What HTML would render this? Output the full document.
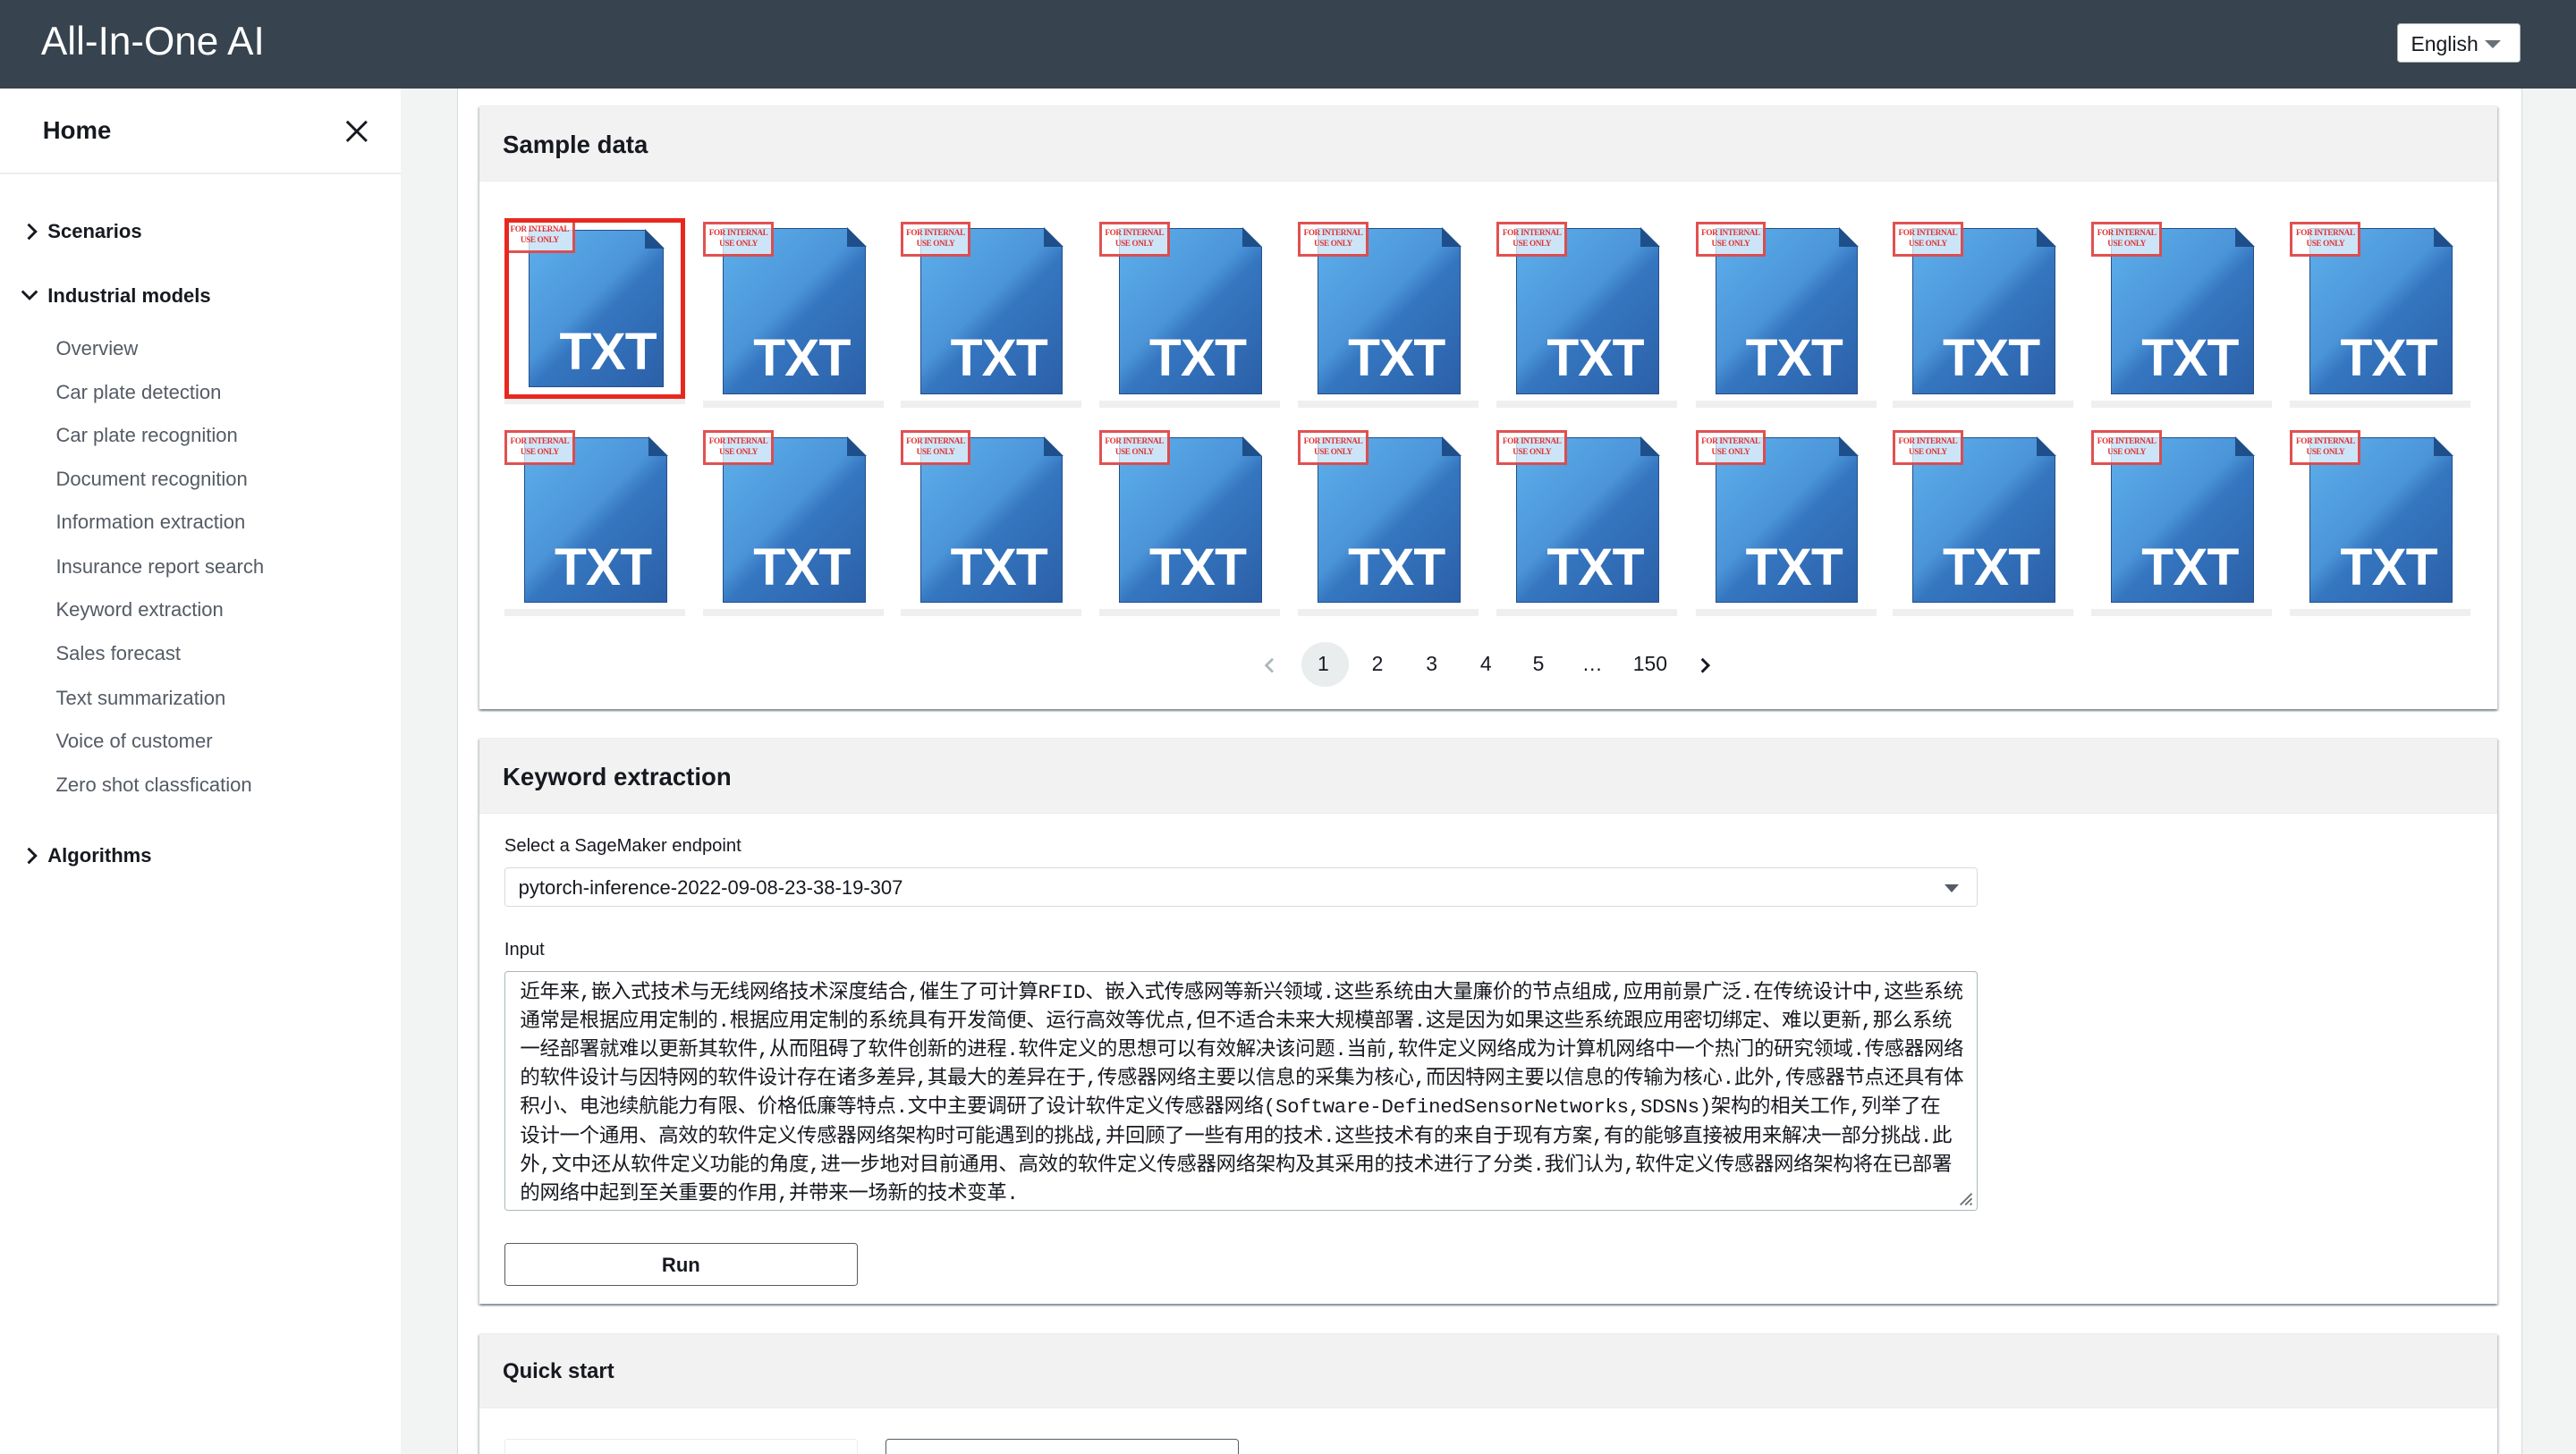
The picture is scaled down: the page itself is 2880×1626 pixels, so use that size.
<!DOCTYPE html>
<html><head><meta charset="utf-8"><style>
*{box-sizing:border-box;margin:0;padding:0}
html,body{width:2880px;height:1626px;overflow:hidden;background:#fff}
#z{zoom:1.83673;width:1568px;height:886px;position:relative;font-family:"Liberation Sans",Arial,sans-serif;color:#16191f;overflow:hidden}
.a{position:absolute}
.hdr{left:0;top:0;width:1568px;height:54px;background:#37434e}
.side{left:0;top:54px;width:244px;height:832px;background:#fff}
.gap{left:244px;top:54px;width:35px;height:832px;background:#f2f3f3;border-right:1px solid #d5dbdb}
.rgap{left:1535px;top:54px;width:33px;height:832px;background:#f2f3f3;border-left:1px solid #d5dbdb}
.nav{font-size:12px;color:#545b64;left:34px}
.card{background:#fff;box-shadow:0 1px 1px 0 rgba(0,28,36,.3),1px 1px 1px 0 rgba(0,28,36,.15),-1px 1px 1px 0 rgba(0,28,36,.15);border-top:1px solid #eaeded}
.ch{left:0;top:0;right:0;height:46px;background:#f2f2f2;border-bottom:1px solid #eaeded;font-weight:bold;font-size:15px;padding:15px 0 0 14px}
.t{position:absolute;width:110px;height:114px}
.st{position:absolute;left:0;top:0;width:43px;height:21px;border:2px solid rgba(220,50,50,.85);background:rgba(255,255,255,.7);z-index:2;font-family:"Liberation Serif",serif;font-size:5px;color:#d33;text-align:center;line-height:6.5px;padding-top:2px;font-weight:bold;white-space:nowrap;letter-spacing:-0.2px;overflow:hidden}
.f{position:absolute;left:12px;top:4px;width:87px;height:101px;background:linear-gradient(135deg,#5eb0ec 0%,#4b94d8 45%,#3576c0 55%,#2b60a8 100%);border:1px solid #244f88}
.f:after{content:"";position:absolute;right:-1px;top:-1px;width:0;height:0;border-top:12px solid #fff;border-left:12px solid #1f4f8a}
.f b{position:absolute;left:18px;bottom:3px;color:#fff;font-size:32px;font-weight:bold;letter-spacing:-.5px}
.sp{position:absolute;left:0;top:109px;width:110px;height:4px;background:#efefef}
.lbl{font-size:11px;color:#16191f}
.ta{font-family:"Liberation Mono","Noto Sans CJK SC",monospace;font-size:12.2px;line-height:17.5px;color:#16191f;white-space:nowrap;letter-spacing:-0.15px}
</style></head><body><div id="z">
<div class="a hdr"></div>
<div class="a" style="left:25px;top:12px;color:#fff;font-size:24px">All-In-One AI</div>
<div class="a" style="left:1459px;top:14px;width:75px;height:24px;background:#fff;border:1px solid #aab7b8;border-radius:2px;font-size:12.5px;padding:5px 0 0 8px;color:#16191f">English<span style="position:absolute;right:11px;top:10px;border-left:5px solid transparent;border-right:5px solid transparent;border-top:5px solid #687078"></span></div>

<div class="a side"></div>
<div class="a gap"></div>
<div class="a rgap"></div>
<div class="a" style="left:26px;top:71px;font-size:15px;font-weight:bold">Home</div>
<svg class="a" style="left:210px;top:73px" width="14" height="14" viewBox="0 0 14 14"><path d="M1 1L13 13M13 1L1 13" stroke="#16191f" stroke-width="1.6"/></svg>
<div class="a" style="left:0;top:105px;width:244px;height:1px;background:#eaeded"></div>
<svg class="a" style="left:14px;top:135px" width="10" height="12"><path d="M3 1.5L7.5 6L3 10.5" stroke="#16191f" stroke-width="1.6" fill="none"/></svg>
<div class="a" style="left:29px;top:134px;font-size:12px;font-weight:bold">Scenarios</div>
<svg class="a" style="left:12px;top:175px" width="12" height="10"><path d="M1.5 2.5L6 7L10.5 2.5" stroke="#16191f" stroke-width="1.6" fill="none"/></svg>
<div class="a" style="left:29px;top:173px;font-size:12px;font-weight:bold">Industrial models</div>
<div class="a nav" style="top:205px">Overview</div>
<div class="a nav" style="top:232px">Car plate detection</div>
<div class="a nav" style="top:258px">Car plate recognition</div>
<div class="a nav" style="top:285px">Document recognition</div>
<div class="a nav" style="top:311px">Information extraction</div>
<div class="a nav" style="top:338px">Insurance report search</div>
<div class="a nav" style="top:364px">Keyword extraction</div>
<div class="a nav" style="top:391px">Sales forecast</div>
<div class="a nav" style="top:418px">Text summarization</div>
<div class="a nav" style="top:444px">Voice of customer</div>
<div class="a nav" style="top:471px">Zero shot classfication</div>
<svg class="a" style="left:14px;top:515px" width="10" height="12"><path d="M3 1.5L7.5 6L3 10.5" stroke="#16191f" stroke-width="1.6" fill="none"/></svg>
<div class="a" style="left:29px;top:514px;font-size:12px;font-weight:bold">Algorithms</div>

<div class="a card" style="left:292px;top:64px;width:1228px;height:368px">
<div class="a ch">Sample data</div>
</div>
<div id="g"></div>
<script>
var xs=[307,428,548,669,790,911,1032,1152,1273,1394],ys=[133,260],h='';
ys.forEach(function(y,r){xs.forEach(function(x,c){
var sel=(r==0&&c==0);
h+='<div class="t" style="left:'+x+'px;top:'+(y+(sel?0:2))+'px"><div class="st">FOR INTERNAL<br>USE ONLY</div><div class="f"'+(sel?' style="left:15px;top:7px;width:82px;height:96px"':'')+'><b>TXT</b></div><div class="sp"></div>'+(sel?'<div style="position:absolute;left:0;top:0;width:110px;height:110px;border:3px solid #e8281f;z-index:3"></div>':'')+'</div>';
});});
document.getElementById('g').innerHTML=h;
</script>
<div class="a" style="left:792px;top:391px;width:29px;height:27px;border-radius:50%;background:#eaeded"></div>
<svg class="a" style="left:769px;top:400px" width="8" height="10"><path d="M6 1L2 5L6 9" stroke="#aab7b8" stroke-width="1.5" fill="none"/></svg>
<div class="a" style="left:802px;top:397px;font-size:12.5px">1</div>
<div class="a" style="left:835px;top:397px;font-size:12.5px">2</div>
<div class="a" style="left:868px;top:397px;font-size:12.5px">3</div>
<div class="a" style="left:901px;top:397px;font-size:12.5px">4</div>
<div class="a" style="left:933px;top:397px;font-size:12.5px">5</div>
<div class="a" style="left:963px;top:397px;font-size:12.5px">…</div>
<div class="a" style="left:994px;top:397px;font-size:12.5px">150</div>
<svg class="a" style="left:1034px;top:400px" width="8" height="10"><path d="M2 1L6 5L2 9" stroke="#16191f" stroke-width="1.6" fill="none"/></svg>

<div class="a card" style="left:292px;top:449px;width:1228px;height:345px">
<div class="a ch">Keyword extraction</div>
</div>
<div class="a lbl" style="left:307px;top:509px">Select a SageMaker endpoint</div>
<div class="a" style="left:307px;top:528px;width:897px;height:24px;border:1px solid #d5dbdb;border-radius:2px;font-size:12px;padding:5px 0 0 8px">pytorch-inference-2022-09-08-23-38-19-307<span style="position:absolute;right:11px;top:10px;border-left:4.5px solid transparent;border-right:4.5px solid transparent;border-top:5px solid #545b64"></span></div>
<div class="a lbl" style="left:307px;top:572px">Input</div>
<div class="a ta" style="left:307px;top:591px;width:897px;height:146px;border:1px solid #aab7b8;border-radius:2px;padding:4px 0 0 9px;overflow:hidden">近年来,嵌入式技术与无线网络技术深度结合,催生了可计算RFID、嵌入式传感网等新兴领域.这些系统由大量廉价的节点组成,应用前景广泛.在传统设计中,这些系统<br>通常是根据应用定制的.根据应用定制的系统具有开发简便、运行高效等优点,但不适合未来大规模部署.这是因为如果这些系统跟应用密切绑定、难以更新,那么系统<br>一经部署就难以更新其软件,从而阻碍了软件创新的进程.软件定义的思想可以有效解决该问题.当前,软件定义网络成为计算机网络中一个热门的研究领域.传感器网络<br>的软件设计与因特网的软件设计存在诸多差异,其最大的差异在于,传感器网络主要以信息的采集为核心,而因特网主要以信息的传输为核心.此外,传感器节点还具有体<br>积小、电池续航能力有限、价格低廉等特点.文中主要调研了设计软件定义传感器网络(Software-DefinedSensorNetworks,SDSNs)架构的相关工作,列举了在<br>设计一个通用、高效的软件定义传感器网络架构时可能遇到的挑战,并回顾了一些有用的技术.这些技术有的来自于现有方案,有的能够直接被用来解决一部分挑战.此<br>外,文中还从软件定义功能的角度,进一步地对目前通用、高效的软件定义传感器网络架构及其采用的技术进行了分类.我们认为,软件定义传感器网络架构将在已部署<br>的网络中起到至关重要的作用,并带来一场新的技术变革.
<svg style="position:absolute;right:2px;bottom:2px" width="10" height="10"><path d="M9 2L2 9M9 5L5 9M9 8L8 9" stroke="#687078" stroke-width="1"/></svg></div>
<div class="a" style="left:307px;top:757px;width:215px;height:26px;border:1px solid #545b64;border-radius:2px;font-size:12px;font-weight:bold;text-align:center;padding-top:6px;color:#16191f">Run</div>

<div class="a card" style="left:292px;top:812px;width:1228px;height:80px">
<div class="a ch" style="height:45px;padding-top:15px;font-size:13px">Quick start</div>
</div>
<div class="a" style="left:307px;top:876px;width:215px;height:20px;border:1px solid #eaeded;border-radius:2px"></div>
<div class="a" style="left:539px;top:876px;width:215px;height:20px;border:1px solid #545b64;border-radius:2px"></div>
</div></body></html>
